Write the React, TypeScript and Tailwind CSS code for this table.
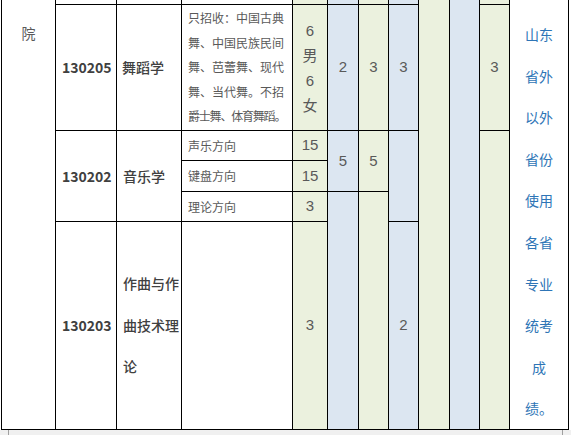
import React from "react";

const G = "bg-[#ebf1de]";
const B = "bg-[#dce6f1]";
const cjk = "font-['Noto_Sans_CJK_SC',sans-serif]";
const num = "font-['Liberation_Sans','Noto_Sans_CJK_SC',sans-serif] text-[15px] text-[#595959]";

export default function App() {
  return (
    <div className="w-[571px] h-[435px] bg-white overflow-hidden">
      <div className="ml-[1px] w-[568px] bg-black pl-px pr-px pb-px">
        <div className="grid gap-px bg-black grid-cols-[53px_60px_64px_110px_34px_30px_29px_29px_30px_29px_29px_58px] grid-rows-[4px_125px_29px_30px_29px_207px]">
          {/* column 1 */}
          <div className={`col-start-1 row-start-1 row-span-6 bg-white flex justify-center pt-[24px] ${cjk} text-[14px] leading-[18px] text-[#595959]`}>
            院
          </div>

          {/* top partial row */}
          <div className="col-start-2 row-start-1 bg-white" />
          <div className="col-start-3 row-start-1 bg-white" />
          <div className="col-start-4 row-start-1 bg-white" />
          <div className={`col-start-5 row-start-1 ${G}`} />
          <div className={`col-start-6 row-start-1 ${B}`} />
          <div className={`col-start-7 row-start-1 ${G}`} />
          <div className={`col-start-8 row-start-1 ${B}`} />
          <div className={`col-start-9 row-start-1 row-span-6 ${G}`} />
          <div className={`col-start-10 row-start-1 row-span-6 ${B}`} />
          <div className={`col-start-11 row-start-1 ${G}`} />
          <div className={`col-start-12 row-start-1 row-span-6 bg-white pt-[14px] ${cjk} text-[14px] leading-[41.6px] text-[#2e75b6] flex flex-col items-center`}>
            <span>山东</span>
            <span>省外</span>
            <span>以外</span>
            <span>省份</span>
            <span>使用</span>
            <span>各省</span>
            <span>专业</span>
            <span>统考</span>
            <span>成</span>
            <span>绩。</span>
          </div>

          {/* row: 130205 */}
          <div className={`col-start-2 row-start-2 bg-white flex items-center pl-[6px] ${cjk} font-bold text-[14px] text-[#404040]`}>
            130205
          </div>
          <div className={`col-start-3 row-start-2 bg-white flex items-center pl-[5px] ${cjk} font-medium text-[14px] text-[#404040]`}>
            舞蹈学
          </div>
          <div className={`col-start-4 row-start-2 bg-white flex flex-col justify-center pl-[6px] ${cjk} text-[12px] leading-[24.6px] text-[#595959] whitespace-nowrap`}>
            <span>只招收：中国古典</span>
            <span>舞、中国民族民间</span>
            <span>舞、芭蕾舞、现代</span>
            <span>舞、当代舞。不招</span>
            <span className="tracking-[-1.2px]">爵士舞、体育舞蹈。</span>
          </div>
          <div className={`col-start-5 row-start-2 ${G} flex flex-col items-center justify-center leading-[25px] ${num}`}>
            <span>6</span>
            <span>男</span>
            <span>6</span>
            <span>女</span>
          </div>
          <div className={`col-start-6 row-start-2 ${B} flex items-center justify-center ${num}`}>2</div>
          <div className={`col-start-7 row-start-2 ${G} flex items-center justify-center ${num}`}>3</div>
          <div className={`col-start-8 row-start-2 ${B} flex items-center justify-center ${num}`}>3</div>
          <div className={`col-start-11 row-start-2 ${G} flex items-center justify-center ${num}`}>3</div>

          {/* 130202 */}
          <div className={`col-start-2 row-start-3 row-span-3 bg-white flex items-center pl-[6px] ${cjk} font-bold text-[14px] text-[#404040]`}>
            130202
          </div>
          <div className={`col-start-3 row-start-3 row-span-3 bg-white flex items-center pl-[6px] ${cjk} font-medium text-[14px] text-[#404040]`}>
            音乐学
          </div>
          <div className={`col-start-4 row-start-3 bg-white flex items-center pl-[6px] ${cjk} text-[12px] text-[#595959]`}>声乐方向</div>
          <div className={`col-start-4 row-start-4 bg-white flex items-center pl-[6px] ${cjk} text-[12px] text-[#595959]`}>键盘方向</div>
          <div className={`col-start-4 row-start-5 bg-white flex items-center pl-[6px] ${cjk} text-[12px] text-[#595959]`}>理论方向</div>
          <div className={`col-start-5 row-start-3 ${G} flex items-center justify-center ${num}`}>15</div>
          <div className={`col-start-5 row-start-4 ${G} flex items-center justify-center ${num}`}>15</div>
          <div className={`col-start-5 row-start-5 ${G} flex items-center justify-center ${num}`}>3</div>
          <div className={`col-start-6 row-start-3 row-span-2 ${B} flex items-center justify-center ${num}`}>5</div>
          <div className={`col-start-7 row-start-3 row-span-2 ${G} flex items-center justify-center ${num}`}>5</div>
          <div className={`col-start-8 row-start-3 row-span-3 ${B}`} />
          <div className={`col-start-11 row-start-3 row-span-4 ${G}`} />
          <div className={`col-start-6 row-start-5 row-span-2 ${B}`} />
          <div className={`col-start-7 row-start-5 row-span-2 ${G}`} />

          {/* 130203 */}
          <div className={`col-start-2 row-start-6 bg-white flex items-center pl-[6px] ${cjk} font-bold text-[14px] text-[#404040]`}>
            130203
          </div>
          <div className={`col-start-3 row-start-6 bg-white flex flex-col justify-center pl-[6px] ${cjk} font-medium text-[14px] leading-[41.6px] text-[#404040] whitespace-nowrap`}>
            <span>作曲与作</span>
            <span>曲技术理</span>
            <span>论</span>
          </div>
          <div className="col-start-4 row-start-6 bg-white" />
          <div className={`col-start-5 row-start-6 ${G} flex items-center justify-center ${num}`}>3</div>
          <div className={`col-start-8 row-start-6 ${B} flex items-center justify-center ${num}`}>2</div>
        </div>
      </div>
      <div className="h-[5px] bg-[#f0f0f0] flex justify-between px-[8px]">
        <div className="w-px bg-[#a0a0a0]" />
        <div className="w-px bg-[#a0a0a0]" />
      </div>
    </div>
  );
}
